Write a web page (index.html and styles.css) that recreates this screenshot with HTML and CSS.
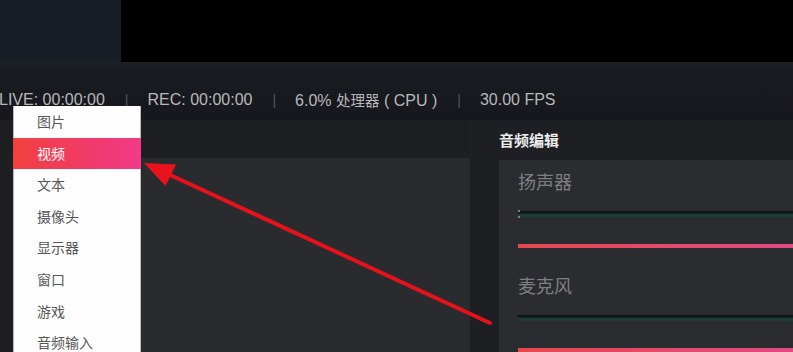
FILE: index.html
```html
<!DOCTYPE html>
<html lang="zh-CN">
<head>
<meta charset="utf-8">
<title>OBS</title>
<link rel="stylesheet" href="styles.css">
</head>
<body>
<div class="app">
  <div class="top">
    <div class="top-left"></div>
    <div class="preview"></div>
  </div>
  <div class="status">
    <span class="stat">LIVE: 00:00:00</span>
    <span class="sep">|</span>
    <span class="stat">REC: 00:00:00</span>
    <span class="sep">|</span>
    <span class="stat">6.0% <span class="cjk">处理器</span> ( CPU )</span>
    <span class="sep">|</span>
    <span class="stat">30.00 FPS</span>
  </div>
  <div class="panels">
    <div class="left-panel">
      <div class="panel-head"></div>
      <div class="panel-body left-body"></div>
    </div>
    <div class="right-panel">
      <div class="panel-head"><span class="panel-title">音频编辑</span></div>
      <div class="panel-body mixer">
        <div class="channel">
          <div class="ch-name">扬声器</div>
          <div class="meter"><span class="mark"></span></div>
          <div class="slider"></div>
        </div>
        <div class="channel">
          <div class="ch-name">麦克风</div>
          <div class="meter"></div>
          <div class="slider"></div>
        </div>
      </div>
    </div>
  </div>

  <ul class="menu">
    <li class="item">图片</li>
    <li class="item active">视频</li>
    <li class="item">文本</li>
    <li class="item">摄像头</li>
    <li class="item">显示器</li>
    <li class="item">窗口</li>
    <li class="item">游戏</li>
    <li class="item">音频输入</li>
  </ul>

  <svg class="arrow" width="793" height="352" viewBox="0 0 793 352">
    <line x1="490" y1="323" x2="168" y2="174" stroke="#e5121c" stroke-width="4" stroke-linecap="round"/>
    <polygon points="144,163 176,164.5 165.5,186" fill="#ea121c"/>
  </svg>
</div>
</body>
</html>
```

FILE: styles.css
```css
* { box-sizing: border-box; }
html, body { margin: 0; padding: 0; }
body {
  width: 793px;
  height: 352px;
  overflow: hidden;
  background: #1d1e22;
  font-family: "Liberation Sans", "Noto Sans CJK SC", sans-serif;
}
.app {
  position: relative;
  width: 793px;
  height: 352px;
  display: flex;
  flex-direction: column;
  overflow: hidden;
}
.top {
  flex: 0 0 62px;
  display: flex;
}
.top-left {
  width: 121px;
  background: #191d25;
}
.preview {
  flex: 1;
  background: #000;
}
.status {
  flex: 0 0 58px;
  display: flex;
  align-items: flex-start;
  padding-top: 28px;
  margin-left: -1px;
  background: linear-gradient(#1c2126 0, #181b20 9px, #16181d 100%);
  font-size: 16px;
  line-height: 20px;
  color: #b8b8ba;
  white-space: nowrap;
}
.cjk {
  font-family: "Noto Sans CJK SC", sans-serif;
  font-size: 14.5px;
}
.sep {
  margin: 0 19px 0 20px;
  color: #55575b;
  font-size: 14px;
}
.panels {
  flex: 1 1 0;
  min-height: 0;
  display: flex;
  background: #1e1f23;
}
.panel-head {
  flex: 0 0 38px;
  background: #1d1e22;
}
.left-panel {
  width: 470px;
  display: flex;
  flex-direction: column;
}
.panel-body {
  flex: 1;
}
.left-body {
  margin-left: 14px;
  background: #2a2b2e;
}
.right-panel {
  flex: 1;
  margin-left: 29px;
  display: flex;
  flex-direction: column;
}
.right-panel .panel-head {
  flex: 0 0 40px;
  display: flex;
  align-items: center;
  background: transparent;
}
.panel-title {
  font-family: "Noto Sans CJK SC", sans-serif;
  font-weight: 700;
  font-size: 15px;
  color: #ececec;
  line-height: 20px;
}
.mixer {
  background: #2b2c30;
  padding: 9px 0 0 19px;
  overflow: hidden;
}
.channel {
  display: flex;
  flex-direction: column;
  margin-bottom: 25px;
}
.ch-name {
  font-family: "Noto Sans CJK SC", sans-serif;
  font-size: 18px;
  line-height: 24px;
  color: #7e7f83;
}
.meter {
  position: relative;
  margin-top: 18px;
  height: 6px;
  background: linear-gradient(#0f1716 0, #0f1716 2px, #1b3933 3px, #1d3f38 6px);
}
.mark {
  position: absolute;
  left: 0;
  top: -1px;
  width: 2px;
  height: 8px;
  background: linear-gradient(#6f8a84 0, #6f8a84 2px, transparent 2px, transparent 6px, #6f8a84 6px);
}
.slider {
  margin-top: 27px;
  height: 4px;
  background: linear-gradient(90deg, #e5484e, #e34a6e 60%, #e24a82);
}
.menu {
  position: absolute;
  left: 13px;
  top: 106px;
  width: 128px;
  height: 260px;
  margin: 0;
  padding: 0;
  list-style: none;
  background: #fdfdfd;
  border-left: 1px solid #b9b9b9;
  border-right: 1px solid #b9b9b9;
}
.item {
  height: 31.6px;
  line-height: 30px;
  padding-left: 23px;
  font-family: "Noto Sans CJK SC", sans-serif;
  font-size: 14px;
  color: #575757;
}
.item.active {
  background: linear-gradient(90deg, #f2403f, #f03a6a 60%, #f23a88);
  color: #fff;
  margin: 0 -1px;
  padding-left: 24px;
}
.arrow {
  position: absolute;
  left: 0;
  top: 0;
  pointer-events: none;
}
```
